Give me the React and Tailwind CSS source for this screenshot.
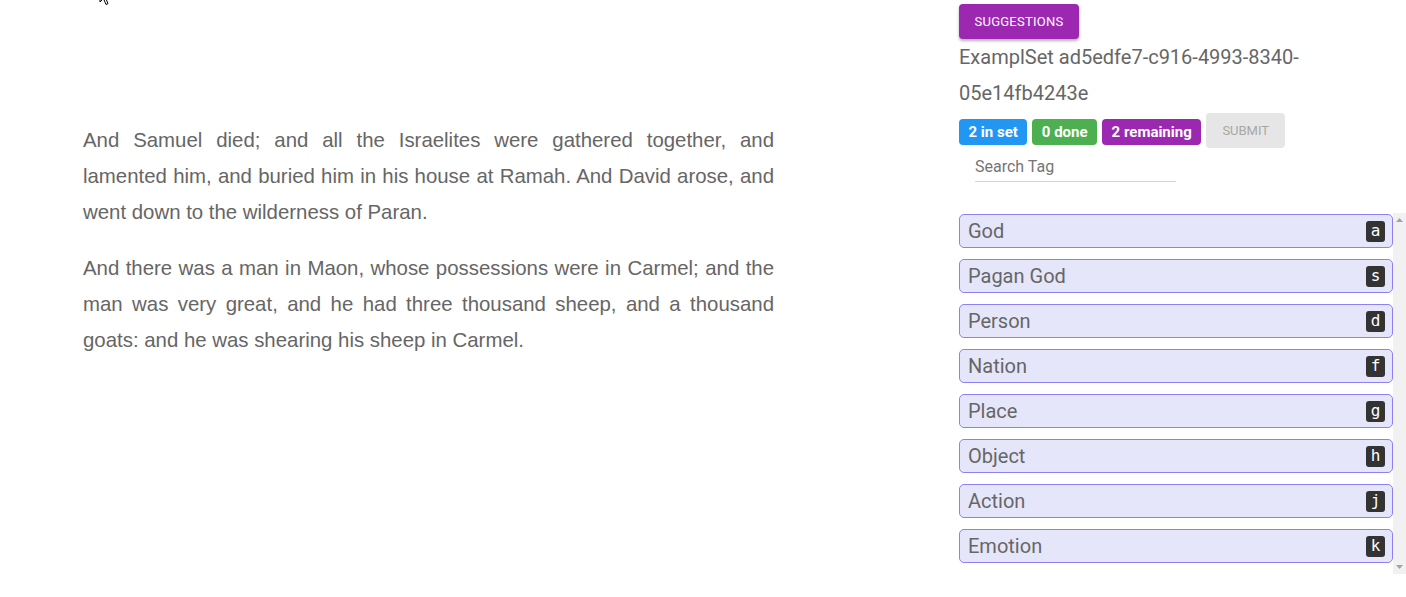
import React from "react";

const para1 =
  "And Samuel died; and all the Israelites were gathered together, and lamented him, and buried him in his house at Ramah. And David arose, and went down to the wilderness of Paran.";
const para2 =
  "And there was a man in Maon, whose possessions were in Carmel; and the man was very great, and he had three thousand sheep, and a thousand goats: and he was shearing his sheep in Carmel.";

const tags = [
  ["God", "a"],
  ["Pagan God", "s"],
  ["Person", "d"],
  ["Nation", "f"],
  ["Place", "g"],
  ["Object", "h"],
  ["Action", "j"],
  ["Emotion", "k"],
];

export default function App() {
  return (
    <div className="relative flex w-[1406px] h-[597px] bg-white overflow-hidden">
      {/* mouse cursor */}
      <svg
        className="absolute left-[99px] top-[-13px]"
        width="12"
        height="19"
        viewBox="0 0 12 19"
      >
        <path
          d="M1 1 L1 15 L4.5 11.5 L7 17.5 L9 16.6 L6.6 11 L11 11 Z"
          fill="white"
          stroke="black"
          strokeWidth="1"
        />
      </svg>

      <div className="w-[774px] shrink-0 pl-[83px] pt-[122px]">
        <div className="w-[691px] text-justify text-[20.4px] leading-[36px] text-[#666666] font-['Liberation_Sans',Arial,sans-serif]">
          <p>{para1}</p>
          <p className="mt-5">{para2}</p>
        </div>
      </div>

      <div className="ml-[185px] w-[447px] shrink-0 pt-1 font-['Roboto',sans-serif] text-[#666666]">
        <button className="h-[35px] w-[120px] rounded-[4px] bg-[#9c27b0] text-white text-[13px] tracking-[0.02em] shadow-[0_2px_3px_rgba(0,0,0,0.3)]">
          SUGGESTIONS
        </button>
        <div className="text-[20px] leading-[36px] text-[#666666]">
          ExamplSet ad5edfe7-c916-4993-8340-05e14fb4243e
        </div>
        <div className="mt-[2px] flex items-start gap-[5px]">
          <span className="mt-[6px] flex h-[26px] items-center rounded-[4px] bg-[#2196f3] px-[9.5px] text-[15px] font-bold text-white">
            2 in set
          </span>
          <span className="mt-[6px] flex h-[26px] items-center rounded-[4px] bg-[#4caf50] px-[9.5px] text-[15px] font-bold text-white">
            0 done
          </span>
          <span className="mt-[6px] flex h-[26px] items-center rounded-[4px] bg-[#9c27b0] px-[9.5px] text-[15px] font-bold text-white">
            2 remaining
          </span>
          <button className="h-[35px] w-[79px] rounded-[4px] bg-[#e6e6e6] text-[13px] text-[#a6a6a6]">
            SUBMIT
          </button>
        </div>
        <div className="ml-4 mt-[2px] w-[201px] border-b border-[#d5d5d5] pt-[5px] pb-[2px] text-[16px] leading-[24px] text-[#757575]">
          Search Tag
        </div>
        <div className="mt-[31px] flex h-[361px]">
          <div className="flex w-[434px] flex-col gap-[11px] overflow-hidden pt-[1px]">
            {tags.map(([name, key]) => (
              <div
                key={name}
                className="flex h-[34px] shrink-0 items-center justify-between rounded-[5px] border border-[#8e80f4] bg-[#e6e6fa] pl-2 pr-[7px]"
              >
                <span className="text-[20px] leading-none text-[#666666]">{name}</span>
                <span className="flex h-[21px] w-[19px] items-center justify-center rounded-[3px] bg-[#333333] font-['DejaVu_Sans_Mono',monospace] text-[16px] leading-none text-white">
                  {key}
                </span>
              </div>
            ))}
          </div>
          <div className="flex w-[13px] flex-col items-center justify-between bg-[#f1f1f1] py-[5px]">
            <svg width="7" height="4" viewBox="0 0 7 4">
              <path d="M0 4 L3.5 0 L7 4 Z" fill="#a3a3a3" />
            </svg>
            <svg width="7" height="4" viewBox="0 0 7 4">
              <path d="M0 0 L3.5 4 L7 0 Z" fill="#a3a3a3" />
            </svg>
          </div>
        </div>
      </div>
    </div>
  );
}
